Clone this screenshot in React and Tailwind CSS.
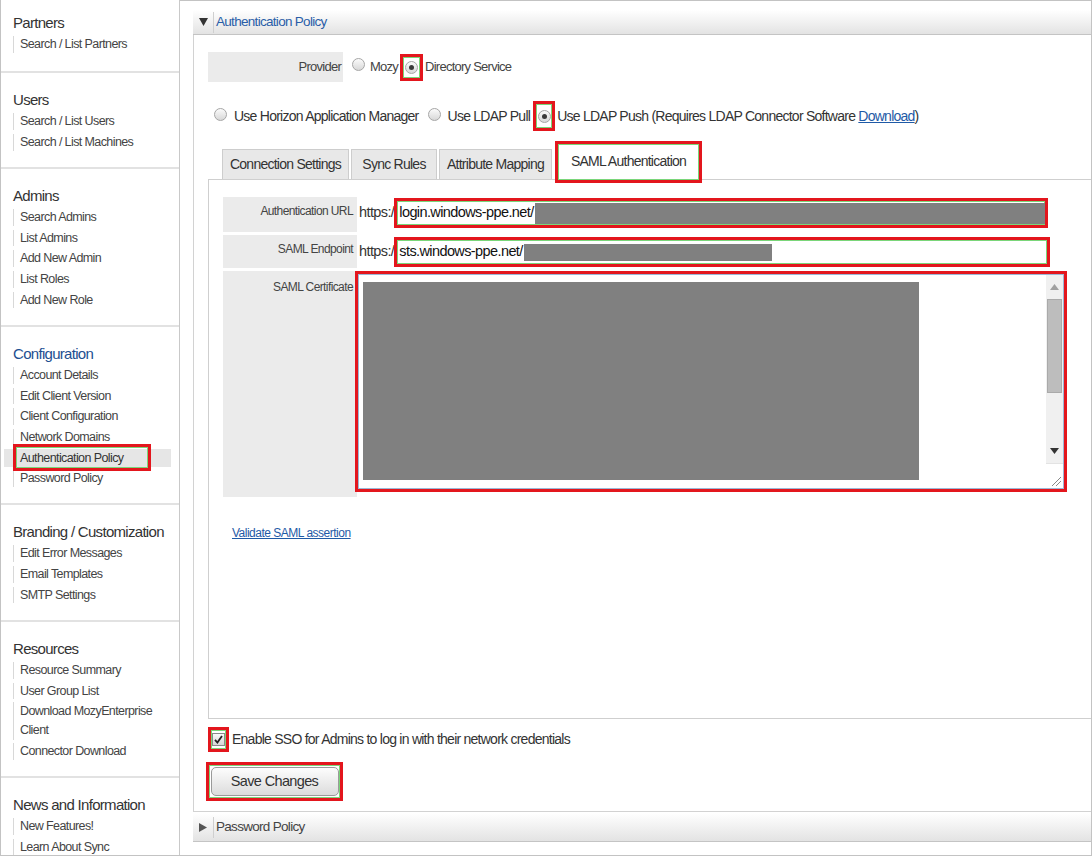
import React from 'react';

const menu = [
  { title: 'Partners', links: ['Search / List Partners'] },
  { title: 'Users', links: ['Search / List Users', 'Search / List Machines'] },
  { title: 'Admins', links: ['Search Admins', 'List Admins', 'Add New Admin', 'List Roles', 'Add New Role'] },
  {
    title: 'Configuration',
    current: true,
    links: ['Account Details', 'Edit Client Version', 'Client Configuration', 'Network Domains', 'Authentication Policy', 'Password Policy'],
  },
  { title: 'Branding / Customization', links: ['Edit Error Messages', 'Email Templates', 'SMTP Settings'] },
  { title: 'Resources', links: ['Resource Summary', 'User Group List', 'Download MozyEnterprise Client', 'Connector Download'] },
  { title: 'News and Information', links: ['New Features!', 'Learn About Sync'] },
];

// red call-out frame with a thin green inner line
function Mark({ className = '', children }) {
  return (
    <div className={`border-[3px] border-[#e3161d] shadow-[inset_0_0_0_1px_#7ad67a] ${className}`}>
      {children}
    </div>
  );
}

function Radio({ checked }) {
  return (
    <span className="inline-flex w-[13px] h-[13px] shrink-0 items-center justify-center rounded-full border border-[#a6a6a6] bg-linear-to-b from-[#fbfbfb] to-[#d8d8d8]">
      {checked && <span className="w-[5px] h-[5px] rounded-full bg-[#3a3a3a]" />}
    </span>
  );
}

function SectionBar({ title, open, tall }) {
  return (
    <div
      className={`flex items-center border-b border-[#c4c4c4] bg-linear-to-b from-[#ffffff] to-[#e3e3e3] ${
        tall ? 'h-[29px]' : 'h-[25px]'
      }`}
    >
      <span className="w-[21px] h-[21px] flex items-center justify-center border-r border-[#cfcfcf]">
        {open ? (
          <svg width="9" height="8" viewBox="0 0 9 8">
            <polygon points="0,0 9,0 4.5,8" fill="#333" />
          </svg>
        ) : (
          <svg width="8" height="9" viewBox="0 0 8 9">
            <polygon points="0,0 8,4.5 0,9" fill="#555" />
          </svg>
        )}
      </span>
      <span
        className={`pl-[2px] text-[13.5px] tracking-[-0.7px] ${open ? 'text-[#2a5ea8]' : 'text-[#444]'}`}
      >
        {title}
      </span>
    </div>
  );
}

function MenuLink({ label }) {
  if (label === 'Authentication Policy') {
    return (
      <div className="py-[1px]">
        <div className="relative ml-[3px] mr-[8px] py-[1px] bg-[#e6e6e6]">
          <div className="ml-[9px] border-l-2 border-[#23406e] pl-[5px] text-[12.5px] tracking-[-0.6px] leading-[16.67px] text-[#333]">
            {label}
          </div>
          <Mark className="absolute -top-[5px] left-[9px] w-[138px] h-[27px]" />
        </div>
      </div>
    );
  }
  const wraps = label.length > 24;
  return (
    <div className={wraps ? 'py-[1px]' : 'py-[2px]'}>
      <div
        className={`ml-[12px] w-[145px] border-l border-[#d8d8d8] pl-[6px] text-[12.5px] tracking-[-0.6px] text-[#444] ${
          wraps ? 'leading-[19px]' : 'leading-[16.67px]'
        }`}
      >
        {label}
      </div>
    </div>
  );
}

function Sidebar() {
  return (
    <aside className="w-[179px] shrink-0 border-r border-[#c9c9c9]">
      {menu.map((sec, i) => (
        <div
          key={sec.title}
          className={`${i === 0 ? 'pt-[12px] pb-[16.5px]' : 'pt-[16px] pb-[14.5px]'} ${
            i < menu.length - 1 ? 'border-b-2 border-[#e2e2e2]' : ''
          }`}
        >
          <div
            className={`pl-[12px] text-[15px] tracking-[-0.7px] leading-[22px] whitespace-nowrap ${
              sec.current ? 'text-[#1d4f91]' : 'text-[#333]'
            }`}
          >
            {sec.title}
          </div>
          {sec.links.map((l) => (
            <MenuLink key={l} label={l} />
          ))}
        </div>
      ))}
    </aside>
  );
}

function Tab({ w, children }) {
  return (
    <div
      className={`${w} h-[30px] flex items-center justify-center whitespace-nowrap border border-b-0 border-[#cdcdcd] bg-[#e8e8e8] text-[14px] tracking-[-0.75px] text-[#333]`}
    >
      {children}
    </div>
  );
}

function FieldLabel({ children, pad }) {
  return (
    <div
      className={`w-[134px] shrink-0 bg-[#ebebeb] text-right pr-[4px] text-[12px] tracking-[-0.6px] leading-[16px] text-[#444] ${pad}`}
    >
      {children}
    </div>
  );
}

function SamlForm() {
  return (
    <div className="h-[540px] border-t border-b border-l border-[#cfcfcf] pt-[17px] pl-[14px]">
      {/* Authentication URL */}
      <div className="flex h-[35px]">
        <FieldLabel pad="pt-[6px]">Authentication URL</FieldLabel>
        <div className="flex items-center h-[30px] mt-[1px]">
          <span className="ml-[2px] text-[14.5px] tracking-[-0.6px] text-[#333]">https:/</span>
          <Mark className="w-[654px] h-[30px] flex items-center pl-[2px]">
            <span className="text-[14.5px] tracking-[-0.6px] text-[#111] pr-[1px]">login.windows-ppe.net/</span>
            <div className="flex-1 h-[21px] bg-[#808080]" />
          </Mark>
        </div>
      </div>

      {/* SAML Endpoint */}
      <div className="flex h-[33px] mt-[3px]">
        <FieldLabel pad="pt-[6px]">SAML Endpoint</FieldLabel>
        <div className="flex items-center h-[30px] mt-[2px]">
          <span className="ml-[2px] text-[14.5px] tracking-[-0.6px] text-[#333]">https:/</span>
          <Mark className="w-[656px] h-[30px] flex items-center pl-[2px]">
            <span className="text-[14.5px] tracking-[-0.6px] text-[#111] pr-[1px]">sts.windows-ppe.net/</span>
            <div className="w-[248px] h-[17px] bg-[#808080]" />
          </Mark>
        </div>
      </div>

      {/* SAML Certificate */}
      <div className="flex h-[226px] mt-[3px]">
        <FieldLabel pad="pt-[8px]">SAML Certificate</FieldLabel>
        <Mark className="-ml-[2px] w-[712px] h-[221px] bg-white">
          <div className="h-full border border-[#9db7d6] flex">
            <div className="flex-1 pt-[7px] pl-[4px]">
              <div className="w-[556px] h-[198px] bg-[#808080]" />
            </div>
            <div className="w-[17px] h-full flex flex-col bg-[#f0f0f0]">
              <div className="h-[24px] flex items-center justify-center">
                <svg width="9" height="6" viewBox="0 0 9 6">
                  <polygon points="0,6 9,6 4.5,0" fill="#a0a0a0" />
                </svg>
              </div>
              <div className="mx-[1px] h-[94px] bg-[#bdbdbd] border border-[#aaaaaa]" />
              <div className="flex-1" />
              <div className="h-[24px] flex items-center justify-center">
                <svg width="9" height="6" viewBox="0 0 9 6">
                  <polygon points="0,0 9,0 4.5,6" fill="#333" />
                </svg>
              </div>
              <div className="h-[25px] bg-white border-t border-[#e3e3e3] flex items-end justify-end p-[2px]">
                <svg width="10" height="10" viewBox="0 0 10 10">
                  <line x1="1" y1="10" x2="10" y2="1" stroke="#888" strokeWidth="1" />
                  <line x1="5" y1="10" x2="10" y2="5" stroke="#888" strokeWidth="1" />
                </svg>
              </div>
            </div>
          </div>
        </Mark>
      </div>

      <div className="mt-[23px] pl-[9px]">
        <a className="text-[12px] tracking-[-0.5px] text-[#1f5aa6] underline">Validate SAML assertion</a>
      </div>
    </div>
  );
}

export default function App() {
  return (
    <div className="w-[1092px] h-[856px] flex bg-white border-l border-r border-b border-[#c3c3c3] font-['Liberation_Sans',Arial,sans-serif] overflow-hidden">
      <Sidebar />

      <main className="flex-1 flex flex-col border-t border-[#c3c3c3] pl-[13px] pt-[9px]">
        <SectionBar title="Authentication Policy" open />

        <div className="border-l border-b border-[#d2d2d2] pl-[14px] pt-[17px] pb-[10px]">
          {/* provider choice */}
          <div className="flex items-center h-[30px] text-[13px] tracking-[-0.75px] text-[#444]">
            <div className="w-[135px] h-[30px] bg-[#ebebeb] flex items-center justify-end pr-[2px]">Provider</div>
            <span className="ml-[9px]">
              <Radio />
            </span>
            <span className="ml-[5px]">Mozy</span>
            <Mark className="ml-[2px] w-[23px] h-[27px] flex items-center justify-center">
              <Radio checked />
            </Mark>
            <span className="ml-[2px]">Directory Service</span>
          </div>

          {/* directory sync mode */}
          <div className="flex items-center h-[30px] mt-[19px] text-[14px] tracking-[-0.75px] text-[#333] whitespace-nowrap">
            <span className="ml-[6px]">
              <Radio />
            </span>
            <span className="ml-[7px]">Use Horizon Application Manager</span>
            <span className="ml-[9px]">
              <Radio />
            </span>
            <span className="ml-[7px]">Use LDAP Pull</span>
            <Mark className="ml-[3px] w-[22px] h-[30px] flex items-center justify-center">
              <Radio checked />
            </Mark>
            <span className="ml-[2px]">
              Use LDAP Push (Requires LDAP Connector Software{' '}
              <a className="text-[#1f5aa6] underline">Download</a>)
            </span>
          </div>

          {/* tabs */}
          <div className="relative z-10 flex items-end h-[38px] mt-[10px] pl-[14px] gap-[2px]">
            <Tab w="w-[127px]">Connection Settings</Tab>
            <Tab w="w-[86px]">Sync Rules</Tab>
            <Tab w="w-[113px]">Attribute Mapping</Tab>
            <Mark className="ml-[1px] w-[147px] h-[42px] -mb-[4px] bg-white flex items-center justify-center pb-[2px] text-[14px] tracking-[-0.75px] text-[#333] whitespace-nowrap">
              SAML Authentication
            </Mark>
          </div>

          <SamlForm />

          {/* admin SSO toggle */}
          <div className="flex items-center h-[25px] mt-[8px]">
            <Mark className="w-[21px] h-[25px] flex items-center justify-center">
              <span className="w-[13px] h-[13px] flex items-center justify-center border border-[#8a8a8a] bg-linear-to-b from-[#fafafa] to-[#d6d6d6]">
                <svg width="9" height="9" viewBox="0 0 9 9">
                  <path d="M1 4.8 L3.4 7.5 L8 1" fill="none" stroke="#222" strokeWidth="1.8" />
                </svg>
              </span>
            </Mark>
            <span className="ml-[3px] text-[14px] tracking-[-0.75px] text-[#333] whitespace-nowrap">
              Enable SSO for Admins to log in with their network credentials
            </span>
          </div>

          <Mark className="-ml-[2px] mt-[10px] w-[137px] h-[39px] flex items-center justify-center">
            <button
              type="button"
              className="w-[128px] h-[29px] rounded-[5px] border border-[#9a9a9a] bg-linear-to-b from-[#fdfdfd] to-[#dcdcdc] text-[14.5px] tracking-[-0.65px] text-[#333]"
            >
              Save Changes
            </button>
          </Mark>
        </div>

        <div className="mt-[1px]">
          <SectionBar title="Password Policy" tall />
        </div>
      </main>
    </div>
  );
}
